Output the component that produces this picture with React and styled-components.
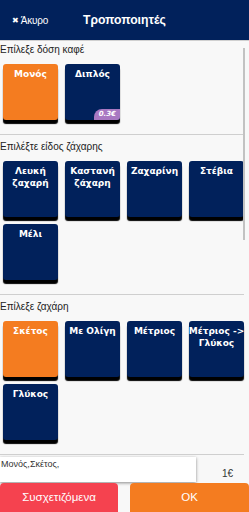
import React, { useState } from 'react';
import styled, { createGlobalStyle } from 'styled-components';

const GlobalStyle = createGlobalStyle`
  html, body {
    margin: 0;
    padding: 0;
    height: 100%;
    background: #f8f8f8;
  }
  #root {
    height: 100%;
  }
`;

const NAVY = '#01215b';
const ORANGE = '#f47c20';

const Screen = styled.div`
  display: flex;
  flex-direction: column;
  height: 512px;
  width: 249px;
  overflow: hidden;
  font-family: 'DejaVu Sans', Verdana, sans-serif;
  background: #f8f8f8;
`;

const TopBar = styled.div`
  flex: 0 0 41px;
  display: flex;
  align-items: center;
  background: ${NAVY};
  color: #fff;
  padding: 0 0 0 12px;
  border-bottom: 1px solid #d0d0d0;
  box-sizing: border-box;
`;

const CancelLink = styled.span`
  font-family: 'Liberation Sans', Arial, sans-serif;
  font-size: 10px;
  letter-spacing: -0.2px;
  width: 71px;
  display: flex;
  align-items: center;
  gap: 2px;
`;

const CancelMark = styled.span`
  font-size: 8px;
`;

const Title = styled.h1`
  margin: 0;
  font-family: 'Liberation Sans', Arial, sans-serif;
  font-size: 12.2px;
  font-weight: bold;
`;

const ScrollArea = styled.div`
  flex: 1;
  position: relative;
  overflow: hidden;
`;

const Scroller = styled.div`
  height: 100%;
  overflow-y: auto;
  padding-right: 5px;
  box-sizing: border-box;
  scrollbar-width: none;

  &::-webkit-scrollbar {
    display: none;
  }
`;

const ScrollThumb = styled.div`
  position: absolute;
  top: 7px;
  right: 4px;
  width: 2px;
  height: 192px;
  background: #c2c2c2;
  pointer-events: none;
`;

const Section = styled.section`
  border-bottom: 1px solid #cfcfcf;
  padding: 6px 0 14px;

  &:first-child {
    padding-top: 3px;
  }
`;

const SectionTitle = styled.div`
  font-family: 'Liberation Sans', Arial, sans-serif;
  font-size: 10px;
  line-height: 12px;
  color: #222;
  margin-bottom: 8px;
`;

const Grid = styled.div`
  display: grid;
  grid-template-columns: repeat(4, 55px);
  grid-auto-rows: 56px;
  gap: 7px;
  padding-left: 3px;
`;

const Option = styled.button`
  position: relative;
  border: none;
  border-radius: 3px;
  padding: 4px 0 0;
  background: ${(p) => (p.$active ? ORANGE : NAVY)};
  color: #fff;
  font-family: 'DejaVu Sans', Verdana, sans-serif;
  font-size: 9px;
  font-weight: bold;
  line-height: 12px;
  text-align: center;
  display: flex;
  justify-content: center;
  align-items: flex-start;
  box-shadow: 0 4px 1px #000;
  cursor: pointer;
`;

const NoBreak = styled.span`
  white-space: nowrap;
`;

const PriceTag = styled.span`
  position: absolute;
  right: 0;
  bottom: 0;
  background: #a878c2;
  color: #fff;
  font-size: 7px;
  font-style: italic;
  font-weight: bold;
  line-height: 11px;
  padding: 0 4px 0 5px;
  border-radius: 8px 0 3px 0;
`;

const Footer = styled.div`
  flex: 0 0 57px;
  display: flex;
  flex-direction: column;
  padding-top: 2px;
  box-sizing: border-box;
`;

const SummaryRow = styled.div`
  display: flex;
  align-items: stretch;
  height: 25px;
`;

const Summary = styled.div`
  width: 196px;
  background: #fff;
  box-shadow: 0 1px 3px rgba(0, 0, 0, 0.45);
  font-family: 'Liberation Sans', Arial, sans-serif;
  font-size: 9px;
  color: #333;
  padding: 2px 0 0 1px;
  box-sizing: border-box;
`;

const Total = styled.div`
  flex: 1;
  display: flex;
  align-items: flex-end;
  justify-content: flex-end;
  padding: 0 16px 3px 0;
  font-family: 'Liberation Sans', Arial, sans-serif;
  font-size: 10px;
  color: #333;
`;

const Actions = styled.div`
  display: grid;
  grid-template-columns: 118px 1fr;
  gap: 12px;
  margin-top: 1px;
  flex: 1;
`;

const ActionButton = styled.button`
  border: none;
  border-radius: 4px 4px 0 0;
  background: ${(p) => p.$bg};
  color: #fff;
  font-family: 'Liberation Sans', Arial, sans-serif;
  font-size: 11.5px;
  padding: 0 0 2px;
  cursor: pointer;
`;

const doses = [
  { label: 'Μονός' },
  { label: 'Διπλός', price: '0.3€' },
];

const sugarTypes = ['Λευκή ζαχαρή', 'Καστανή ζάχαρη', 'Ζαχαρίνη', 'Στέβια', 'Μέλι'];

const sugarLevels = [
  { key: 'Σκέτος', label: 'Σκέτος' },
  { key: 'Με Ολίγη', label: 'Με Ολίγη' },
  { key: 'Μέτριος', label: 'Μέτριος' },
  {
    key: 'Μέτριος -> Γλύκος',
    label: (
      <span>
        <NoBreak>Μέτριος -&gt;</NoBreak> Γλύκος
      </span>
    ),
  },
  { key: 'Γλύκος', label: 'Γλύκος' },
];

export default function App() {
  const [dose, setDose] = useState('Μονός');
  const [sugarType, setSugarType] = useState(null);
  const [sugar, setSugar] = useState('Σκέτος');

  return (
    <>
      <GlobalStyle />
      <Screen>
        <TopBar>
          <CancelLink>
            <CancelMark>✖</CancelMark>Άκυρο
          </CancelLink>
          <Title>Τροποποιητές</Title>
        </TopBar>

        <ScrollArea>
          <Scroller>
            <Section>
              <SectionTitle>Επίλεξε δόση καφέ</SectionTitle>
              <Grid>
                {doses.map((d) => (
                  <Option key={d.label} $active={dose === d.label} onClick={() => setDose(d.label)}>
                    {d.label}
                    {d.price && <PriceTag>{d.price}</PriceTag>}
                  </Option>
                ))}
              </Grid>
            </Section>

            <Section>
              <SectionTitle>Επιλέξτε είδος ζάχαρης</SectionTitle>
              <Grid>
                {sugarTypes.map((s) => (
                  <Option key={s} $active={sugarType === s} onClick={() => setSugarType(s)}>
                    {s}
                  </Option>
                ))}
              </Grid>
            </Section>

            <Section>
              <SectionTitle>Επίλεξε ζαχάρη</SectionTitle>
              <Grid>
                {sugarLevels.map((s) => (
                  <Option key={s.key} $active={sugar === s.key} onClick={() => setSugar(s.key)}>
                    {s.label}
                  </Option>
                ))}
              </Grid>
            </Section>
          </Scroller>
          <ScrollThumb />
        </ScrollArea>

        <Footer>
          <SummaryRow>
            <Summary>{dose},{sugar},</Summary>
            <Total>1€</Total>
          </SummaryRow>
          <Actions>
            <ActionButton $bg="#f5424f">Συσχετιζόμενα</ActionButton>
            <ActionButton $bg={ORANGE}>OK</ActionButton>
          </Actions>
        </Footer>
      </Screen>
    </>
  );
}
